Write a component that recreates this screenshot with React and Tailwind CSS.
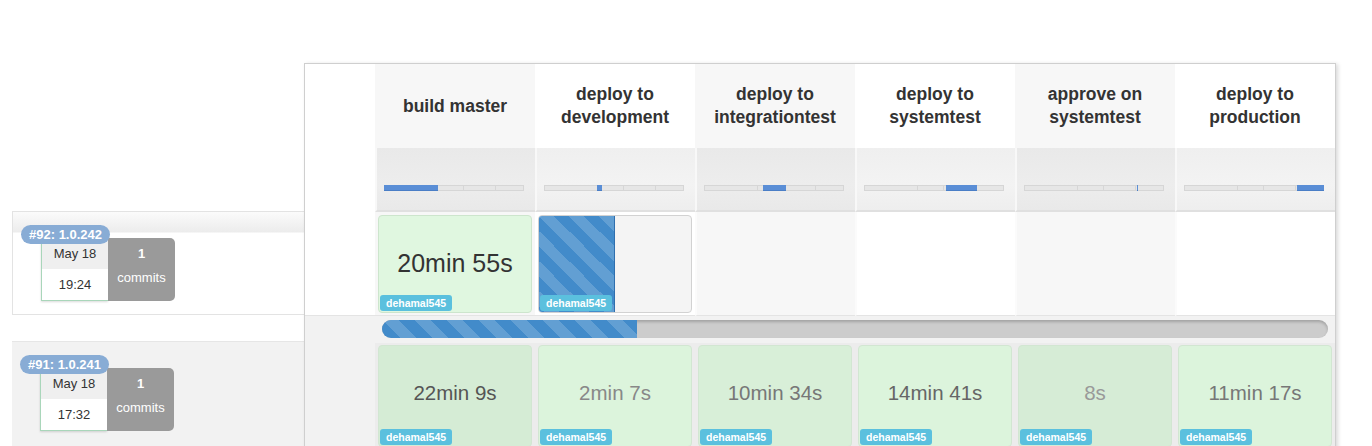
const stages = [
  { name: ['build master'], mark: [0, 54] },
  { name: ['deploy to', 'development'], mark: [53, 58] },
  { name: ['deploy to', 'integrationtest'], mark: [59, 82] },
  { name: ['deploy to', 'systemtest'], mark: [82, 113] },
  { name: ['approve on', 'systemtest'], mark: [113, 114] },
  { name: ['deploy to', 'production'], mark: [113, 140] },
]

const oldRun = [
  { time: '22min 9s', bg: 'bg-[#d5ecd5]', text: 'text-[#555]' },
  { time: '2min 7s', bg: 'bg-[#dcf4dc]', text: 'text-[#888]' },
  { time: '10min 34s', bg: 'bg-[#d8efd8]', text: 'text-[#777]' },
  { time: '14min 41s', bg: 'bg-[#dcf4dc]', text: 'text-[#666]' },
  { time: '8s', bg: 'bg-[#d6ecd6]', text: 'text-[#999]' },
  { time: '11min 17s', bg: 'bg-[#dcf4dc]', text: 'text-[#777]' },
]

const stripes =
  'bg-[linear-gradient(45deg,rgba(255,255,255,0.17)_25%,transparent_25%,transparent_50%,rgba(255,255,255,0.17)_50%,rgba(255,255,255,0.17)_75%,transparent_75%,transparent)]'

function UserTag() {
  return (
    <span className="absolute left-[1px] bottom-[1px] h-[16px] px-[6px] rounded-[3px] bg-[#5bc0de] text-white text-[10.5px] font-bold leading-[16px]">
      dehamal545
    </span>
  )
}

function MiniBar({ mark }) {
  const segs = [54, 26, 32, 28]
  return (
    <div className="relative mx-[7px] mt-[37px] h-[6px] flex">
      {segs.map((w, i) => (
        <div
          key={i}
          className="h-full bg-[#e6e6e6] border border-[#d6d6d6] border-l-0 first:border-l"
          style={{ width: w }}
        />
      ))}
      <div
        className="absolute top-0 h-full bg-[#5a8ed6] border-b border-[#4a7ec6]"
        style={{ left: mark[0], width: Math.max(1, mark[1] - mark[0]) }}
      />
    </div>
  )
}

function BuildInfo({ id, date, time }) {
  return (
    <div className="relative h-full pl-[28px] pt-[26px]">
      <span className="absolute left-[8px] top-[13px] h-[19px] px-[8px] rounded-full bg-[#88acd5] text-white text-[13px] font-bold leading-[19px]">
        {id}
      </span>
      <div className="flex">
        <div className="w-[67px] h-[63px] flex flex-col border-l border-b border-[#a9d6ba] shadow-[0_1px_2px_rgba(0,0,0,0.15)] text-[13px] text-[#333]">
          <div className="h-[31px] bg-[#efefef] flex items-center justify-center pt-[1px]">{date}</div>
          <div className="flex-1 bg-white flex items-center justify-center">{time}</div>
        </div>
        <div className="w-[67px] h-[63px] bg-[#9a9a9a] rounded-r-[5px] flex flex-col items-center justify-center pb-[7px] text-white text-[13px] leading-[24px]">
          <span className="font-bold">1</span>
          <span>commits</span>
        </div>
      </div>
    </div>
  )
}

export default function App() {
  return (
    <div className="h-[446px] overflow-hidden bg-white flex font-['Liberation_Sans',Arial,sans-serif]">
      {/* build list */}
      <div className="w-[292px] ml-[12px] pt-[211px] shrink-0">
        <div className="h-[104px] border border-r-0 border-[#e3e3e3] bg-[linear-gradient(to_bottom,#fbfbfb_0px,#ececec_20px,#ffffff_21px)]">
          <BuildInfo id="#92: 1.0.242" date="May 18" time="19:24" />
        </div>
        <div className="h-[130px] mt-[26px] border-t border-[#e6e6e6] bg-[#f2f2f2]">
          <BuildInfo id="#91: 1.0.241" date="May 18" time="17:32" />
        </div>
      </div>

      {/* stage table */}
      <div className="mt-[63px] w-[1032px] shrink-0 self-start border border-[#cfcfcf] shadow-[2px_1px_4px_rgba(0,0,0,0.15)] bg-white">
        <div className="grid grid-cols-[70px_repeat(6,160px)]">
          {/* header names */}
          <div className="h-[84px] bg-white" />
          {stages.map((s, i) => (
            <div
              key={s.name.join()}
              className={`h-[84px] flex flex-col items-center justify-center text-[17.5px] font-bold text-[#333] leading-[23px] ${i % 2 === 0 ? 'bg-[#f7f7f7]' : 'bg-white'}`}
            >
              {s.name.map((l) => (
                <span key={l}>{l}</span>
              ))}
            </div>
          ))}

          {/* stage timing bars */}
          <div className="h-[64px] bg-white" />
          {stages.map((s, i) => (
            <div
              key={'bar' + i}
              className={`h-[64px] border-l-2 border-[#f8f8f8] border-b-2 border-b-[#e0e0e0] ${i % 2 === 0 ? 'bg-[linear-gradient(to_bottom,#e9e9e9,#ededed_60%,#e9e9e9)]' : 'bg-[linear-gradient(to_bottom,#efefef,#f3f3f3_60%,#eeeeee)]'}`}
            >
              <MiniBar mark={s.mark} />
            </div>
          ))}

          {/* run #92 */}
          <div className="h-[104px] bg-white border-b border-[#e4e4e4]" />
          <div className="h-[104px] bg-[#f7f7f7] border-b border-[#e4e4e4] pt-[3px] px-[3px] pb-[2px]">
            <div className="relative h-full rounded-[4px] border border-[#cde5cd] bg-[#e0f7e0] flex items-center justify-center text-[25px] text-[#333]">
              20min 55s
              <UserTag />
            </div>
          </div>
          <div className="h-[104px] bg-white border-b border-[#e4e4e4] pt-[3px] px-[3px] pb-[2px]">
            <div className="relative h-full rounded-[4px] border border-[#d2d2d2] bg-[#f4f4f4] overflow-hidden">
              <div className={`h-full w-1/2 bg-[#428bca] border-r border-[#2f6fae] ${stripes} bg-size-[30px_30px]`} />
              <UserTag />
            </div>
          </div>
          {[0, 1, 2, 3].map((i) => (
            <div
              key={'empty' + i}
              className={`h-[104px] border-l-2 border-[#fbfbfb] border-b border-b-[#e4e4e4] ${i % 2 === 0 ? 'bg-[#f7f7f7]' : 'bg-white'}`}
            />
          ))}

          {/* overall progress */}
          <div className="h-[27px] bg-[#f2f2f2]" />
          <div className="col-span-6 h-[27px] bg-[#f2f2f2] px-[7px] pt-[4px]">
            <div className="h-[18px] rounded-[9px] bg-[#cccccc] shadow-[inset_0_2px_3px_rgba(0,0,0,0.2)] overflow-hidden">
              <div className={`h-full w-[27%] bg-[#428bca] ${stripes} bg-size-[32px_32px]`} />
            </div>
          </div>

          {/* run #91 */}
          <div className="h-[110px] bg-[#f2f2f2]" />
          {oldRun.map((r) => (
            <div key={r.time} className="h-[110px] bg-[#ececec] px-[3px] pt-[2px]">
              <div className={`relative h-[102px] pb-[6px] rounded-[4px] border border-[#d2e6d2] ${r.bg} flex items-center justify-center text-[20.5px] ${r.text}`}>
                {r.time}
                <UserTag />
              </div>
            </div>
          ))}
        </div>
      </div>
    </div>
  )
}
